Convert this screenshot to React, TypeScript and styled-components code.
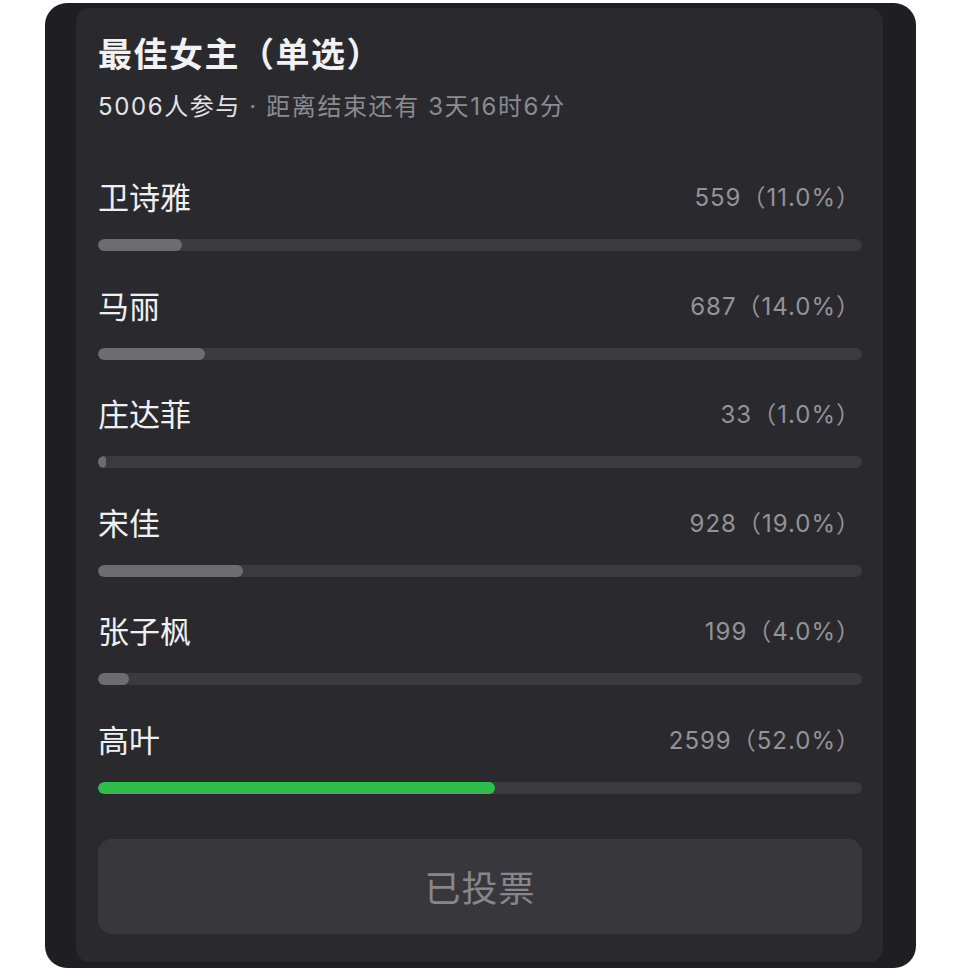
import React from "react";
import styled, { createGlobalStyle } from "styled-components";

const GlobalStyle = createGlobalStyle`
  body {
    margin: 0;
    background: #ffffff;
    font-family: "Inter", "Noto Sans CJK SC", sans-serif;
  }
`;

type Option = { name: string; count: number; pct: number; winner?: boolean };

const options: Option[] = [
  { name: "卫诗雅", count: 559, pct: 11.0 },
  { name: "马丽", count: 687, pct: 14.0 },
  { name: "庄达菲", count: 33, pct: 1.0 },
  { name: "宋佳", count: 928, pct: 19.0 },
  { name: "张子枫", count: 199, pct: 4.0 },
  { name: "高叶", count: 2599, pct: 52.0, winner: true },
];

export default function App() {
  return (
    <>
      <GlobalStyle />
      <Frame>
        <Card>
          <Title>最佳女主（单选）</Title>
          <Meta>
            <Strong>5006人参与</Strong> · 距离结束还有 3天16时6分
          </Meta>
          <List>
            {options.map((o) => (
              <Row key={o.name}>
                <RowHead>
                  <Name>{o.name}</Name>
                  <Count>
                    {o.count}（{o.pct.toFixed(1)}%）
                  </Count>
                </RowHead>
                <Track>
                  <Fill $winner={o.winner} style={{ width: `${o.pct}%` }} />
                </Track>
              </Row>
            ))}
          </List>
          <VoteButton disabled>已投票</VoteButton>
        </Card>
      </Frame>
    </>
  );
}

const Frame = styled.div`
  margin: 3px 0 0 45px;
  width: 871px;
  box-sizing: border-box;
  padding: 5px 33px 6px 31px;
  background: #1f1f23;
  border-radius: 22px;
`;

const Card = styled.div`
  background: #2a2a2e;
  border-radius: 14px;
  padding: 27px 21px 28px 22px;
`;

const Title = styled.div`
  font-size: 34px;
  line-height: 40px;
  font-weight: 700;
  color: #f2f2f4;
  letter-spacing: 1.5px;
`;

const Meta = styled.div`
  margin-top: 17px;
  font-size: 24px;
  line-height: 30px;
  color: #8b8b90;
  letter-spacing: 1.6px;
`;

const Strong = styled.span`
  color: #e4e4e6;
`;

const List = styled.div`
  margin-top: 58px;
  display: flex;
  flex-direction: column;
  gap: 37.5px;
`;

const Row = styled.div`
  display: flex;
  flex-direction: column;
  gap: 23px;
`;

const RowHead = styled.div`
  display: flex;
  justify-content: space-between;
  align-items: center;
  height: 36px;
  padding-right: 1px;
`;

const Name = styled.span`
  font-size: 31px;
  line-height: 36px;
  color: #f0f0f2;
`;

const Count = styled.span`
  font-size: 24px;
  line-height: 36px;
  color: #939398;
  letter-spacing: 1px;
`;

const Track = styled.div`
  height: 12px;
  border-radius: 6px;
  background: #3a3a3f;
  overflow: hidden;
`;

const Fill = styled.div<{ $winner?: boolean }>`
  height: 100%;
  min-width: 7px;
  border-radius: 6px;
  background: ${(p) => (p.$winner ? "#30bd4e" : "#6c6c71")};
`;

const VoteButton = styled.button`
  margin-top: 45px;
  width: 100%;
  height: 95px;
  border: none;
  border-radius: 14px;
  background: #38383c;
  color: #86868b;
  font-family: "Noto Sans CJK SC", sans-serif;
  font-size: 36px;
  letter-spacing: 1px;
`;
